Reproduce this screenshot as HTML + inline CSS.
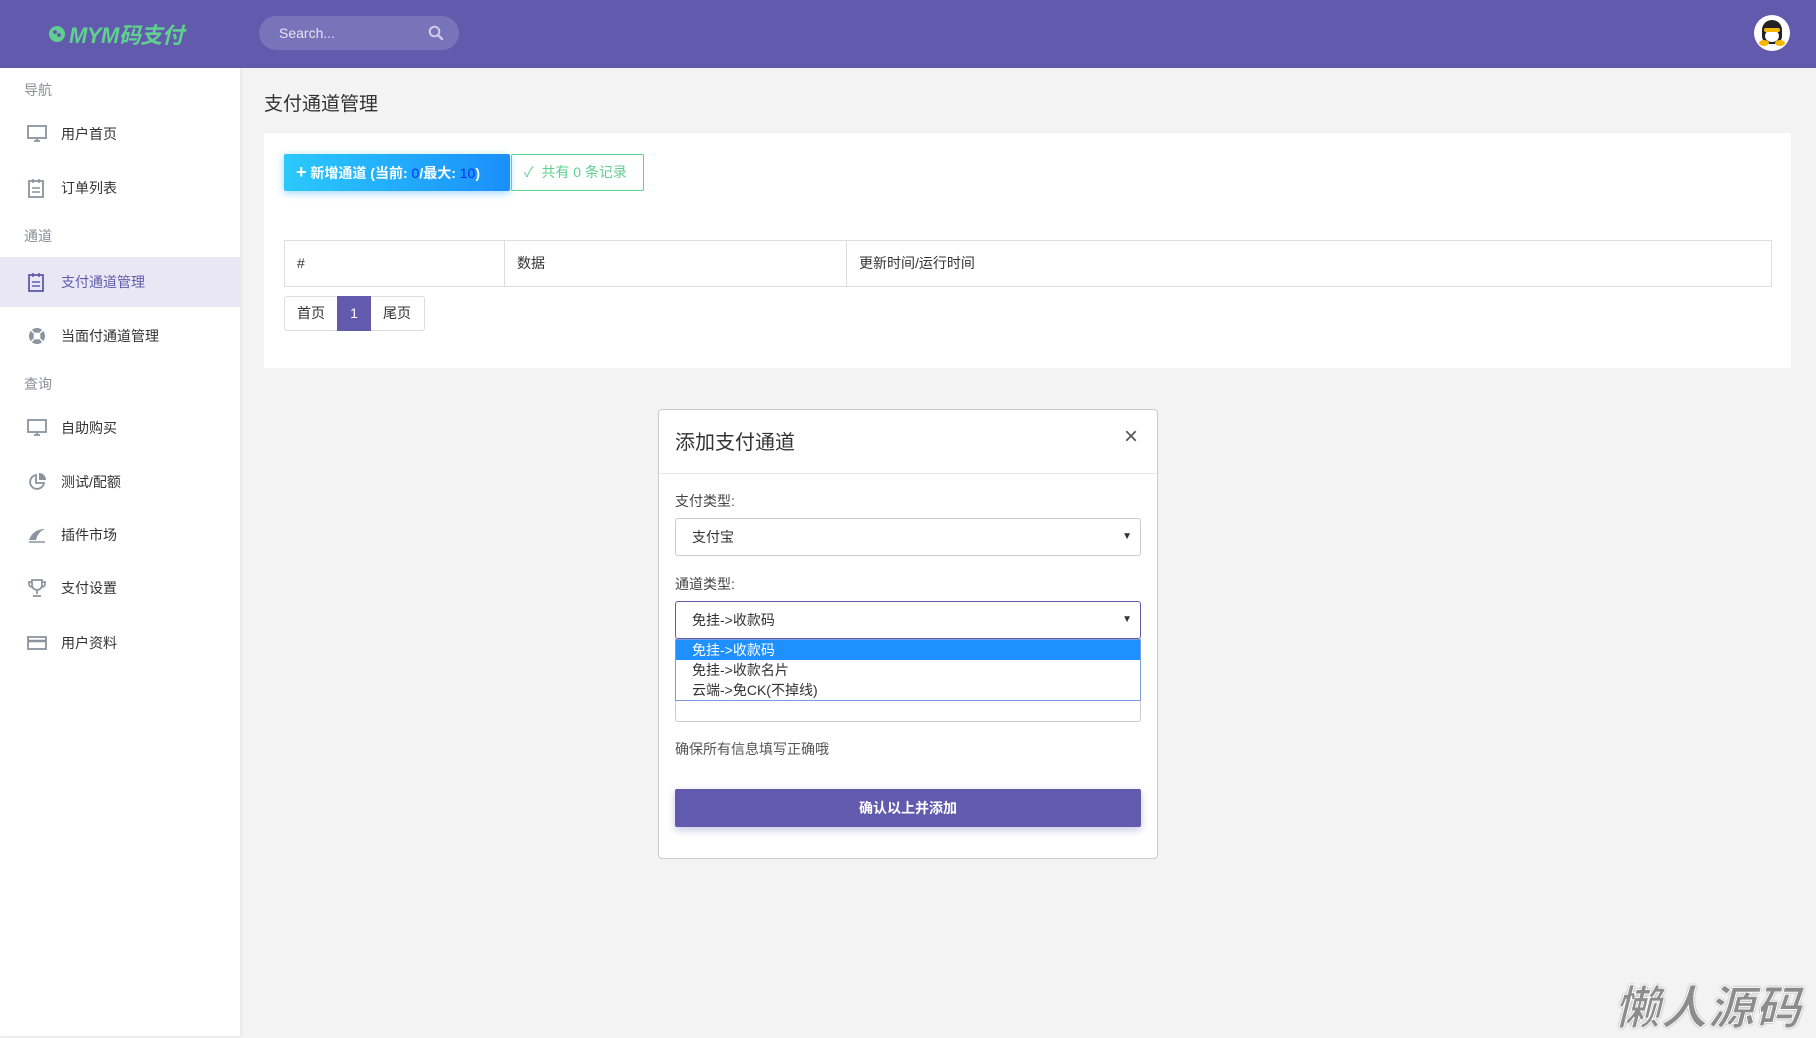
<!DOCTYPE html>
<html><head><meta charset="utf-8"><style>
*{box-sizing:border-box;margin:0;padding:0}
body{width:1816px;height:1036px;overflow:hidden;background:#f3f3f3;font-family:"Liberation Sans","Noto Sans CJK SC",sans-serif;color:#333;position:relative}
.abs{position:absolute}
#hdr{left:0;top:0;width:1816px;height:68px;background:#625bad}
#side{left:0;top:68px;width:240px;height:968px;background:#fff;box-shadow:1px 0 4px rgba(0,0,0,.06)}
.sec{position:absolute;left:24px;font-size:14px;color:#8a8f98}
.it{position:absolute;left:0;width:240px;height:40px;display:flex;align-items:center;font-size:14px;color:#333}
.it svg{position:absolute;left:27px}
.it span{position:absolute;left:61px}
.card{left:264px;top:133px;width:1527px;height:235px;background:#fff}
.modal{left:658px;top:409px;width:500px;height:450px;background:#fff;border:1px solid #ccc;border-radius:4px}
.lbl{position:absolute;left:16px;font-size:14px;color:#444}
.sel{position:absolute;left:16px;width:466px;height:38px;border:1px solid #ccc;border-radius:3px;background:#fff;font-size:14px;padding-left:16px;line-height:36px;color:#333}
.sel i{position:absolute;right:8px;top:0;font-style:normal;font-size:10px;color:#333}
</style></head><body>
<div id="hdr" class="abs">
  <div class="abs" style="left:49px;top:18px;font-size:22px;font-weight:bold;font-style:italic;color:#5fd08f;letter-spacing:-0.5px;white-space:nowrap"><span style="display:inline-block;width:16px;height:16px;border-radius:50%;background:#5fd08f;vertical-align:1px;margin-right:4px;position:relative"><span style="position:absolute;left:4px;top:4px;width:4px;height:4px;border-radius:50%;background:#625bad"></span><span style="position:absolute;left:8px;top:7px;width:4px;height:4px;border-radius:50%;background:#625bad"></span></span>MYM码支付</div>
  <div class="abs" style="left:259px;top:16px;width:200px;height:34px;border-radius:17px;background:rgba(255,255,255,.15)">
    <span class="abs" style="left:20px;top:9px;font-size:14px;color:#e6e4f4">Search...</span>
    <svg class="abs" style="left:169px;top:9px" width="16" height="16" viewBox="0 0 16 16"><circle cx="6.5" cy="6.5" r="4.8" fill="none" stroke="#cfcbe8" stroke-width="2"/><path d="M10 10l4 4" stroke="#cfcbe8" stroke-width="2.4" stroke-linecap="round"/></svg>
  </div>
  <div class="abs" style="left:1754px;top:15px;width:36px;height:36px;border-radius:50%;background:#fff;overflow:hidden">
    <div class="abs" style="left:8px;top:5px;width:20px;height:24px;border-radius:10px 10px 8px 8px;background:#222"></div>
    <div class="abs" style="left:11px;top:15px;width:14px;height:12px;border-radius:50%;background:#fff"></div>
    <div class="abs" style="left:10px;top:13px;width:16px;height:4px;border-radius:2px;background:#f5b800"></div>
    <div class="abs" style="left:5px;top:25px;width:10px;height:6px;border-radius:50%;background:#f5b800"></div>
    <div class="abs" style="left:21px;top:25px;width:10px;height:6px;border-radius:50%;background:#f5b800"></div>
  </div>
</div>
<div id="side" class="abs">
  <div class="sec" style="top:12px">导航</div>
  <div class="it" style="top:46px"><svg width="20" height="18" viewBox="0 0 20 18"><rect x="1" y="1" width="18" height="12" fill="none" stroke="#8a939e" stroke-width="1.8"/><path d="M7 16h6M10 13v3" stroke="#8a939e" stroke-width="1.8"/></svg><span>用户首页</span></div>
  <div class="it" style="top:100px"><svg width="18" height="20" viewBox="0 0 18 20"><rect x="2" y="3" width="14" height="16" fill="none" stroke="#8a939e" stroke-width="1.8"/><path d="M6 1v4M12 1v4M5 10h8M5 14h8" stroke="#8a939e" stroke-width="1.6"/></svg><span>订单列表</span></div>
  <div class="sec" style="top:158px">通道</div>
  <div class="it" style="top:189px;height:50px;background:#e8e7f3;color:#625bad"><svg width="18" height="20" viewBox="0 0 18 20"><rect x="2" y="3" width="14" height="16" fill="none" stroke="#625bad" stroke-width="1.8"/><path d="M6 1v4M12 1v4M5 10h8M5 14h8" stroke="#625bad" stroke-width="1.6"/></svg><span>支付通道管理</span></div>
  <div class="it" style="top:248px"><svg width="20" height="20" viewBox="0 0 20 20"><circle cx="10" cy="10" r="8" fill="#8a939e"/><circle cx="10" cy="10" r="3.5" fill="#fff"/><path d="M4 4l4 4M16 4l-4 4M4 16l4-4M16 16l-4-4" stroke="#fff" stroke-width="1.5"/></svg><span>当面付通道管理</span></div>
  <div class="sec" style="top:306px">查询</div>
  <div class="it" style="top:340px"><svg width="20" height="18" viewBox="0 0 20 18"><rect x="1" y="1" width="18" height="12" fill="none" stroke="#8a939e" stroke-width="1.8"/><path d="M7 16h6M10 13v3" stroke="#8a939e" stroke-width="1.8"/></svg><span>自助购买</span></div>
  <div class="it" style="top:394px"><svg width="20" height="20" viewBox="0 0 20 20"><path d="M9 3a7 7 0 1 0 8 8H9z" fill="none" stroke="#8a939e" stroke-width="1.8"/><path d="M12 1v7h7a7 7 0 0 0-7-7z" fill="#8a939e"/></svg><span>测试/配额</span></div>
  <div class="it" style="top:447px"><svg width="20" height="20" viewBox="0 0 20 20"><path d="M2 15c3-8 9-11 16-11-5 2-8 6-9 11z" fill="#8a939e"/><path d="M2 17h16" stroke="#8a939e" stroke-width="1.5"/></svg><span>插件市场</span></div>
  <div class="it" style="top:500px"><svg width="20" height="20" viewBox="0 0 20 20"><path d="M5 2h10v5a5 5 0 0 1-10 0z M5 4H2v2a3 3 0 0 0 3 3M15 4h3v2a3 3 0 0 1-3 3M10 12v4M6 18h8" fill="none" stroke="#8a939e" stroke-width="1.7"/></svg><span>支付设置</span></div>
  <div class="it" style="top:555px"><svg width="20" height="16" viewBox="0 0 20 16"><rect x="1" y="2" width="18" height="12" fill="none" stroke="#8a939e" stroke-width="1.8"/><path d="M1 6h18" stroke="#8a939e" stroke-width="2.5"/></svg><span>用户资料</span></div>
</div>
<div class="abs" style="left:264px;top:89px;font-size:19px;color:#333">支付通道管理</div>
<div class="abs card">
  <div class="abs" style="left:20px;top:21px;width:226px;height:37px;border-radius:2px;background:linear-gradient(90deg,#2bc9fb,#1a8ffb);box-shadow:0 2px 8px rgba(30,170,250,.45);color:#fff;font-size:14px;font-weight:bold;line-height:37px;padding-left:12px;white-space:nowrap"><span style="font-size:18px">+</span> 新增通道 (当前: <span style="color:#0033ee;font-weight:normal">0</span>/最大: <span style="color:#0033ee;font-weight:normal">10</span>)</div>
  <div class="abs" style="left:247px;top:21px;width:133px;height:37px;border:1px solid #5fd08f;border-radius:2px;color:#5fd08f;font-size:14px;line-height:35px;padding-left:12px;white-space:nowrap">✓&nbsp; 共有 0 条记录</div>
  <div class="abs" style="left:20px;top:107px;width:1488px;height:47px;border:1px solid #ddd;font-size:14px;line-height:45px">
    <span class="abs" style="left:12px">#</span>
    <span class="abs" style="left:219px;top:0;height:45px;border-left:1px solid #ddd"></span>
    <span class="abs" style="left:232px">数据</span>
    <span class="abs" style="left:561px;top:0;height:45px;border-left:1px solid #ddd"></span>
    <span class="abs" style="left:574px">更新时间/运行时间</span>
  </div>
  <div class="abs" style="left:20px;top:163px;width:141px;height:35px;border:1px solid #ddd;border-radius:3px;font-size:14px;line-height:33px">
    <span class="abs" style="left:12px">首页</span>
    <span class="abs" style="left:52px;top:-1px;width:34px;height:35px;background:#625bad;color:#fff;text-align:center;line-height:35px">1</span>
    <span class="abs" style="left:98px">尾页</span>
  </div>
</div>
<div class="abs modal">
  <div class="abs" style="left:16px;top:16px;font-size:20px;color:#333">添加支付通道</div>
  <div class="abs" style="left:465px;top:13px;font-size:24px;color:#555">×</div>
  <div class="abs" style="left:0;top:63px;width:498px;border-top:1px solid #e5e5e5"></div>
  <div class="lbl" style="top:81px">支付类型:</div>
  <div class="sel" style="top:108px">支付宝<i>▼</i></div>
  <div class="lbl" style="top:164px">通道类型:</div>
  <div class="sel" style="top:274px;height:38px"></div>
  <div class="sel" style="top:191px;border-color:#625bad">免挂->收款码<i>▼</i></div>
  <div class="abs" style="left:16px;top:229px;width:466px;height:62px;background:#fff;border:1px solid #7a9fdc;font-size:14px;line-height:20px">
    <div style="background:#1e90ff;color:#fff;padding-left:16px">免挂->收款码</div>
    <div style="padding-left:16px">免挂->收款名片</div>
    <div style="padding-left:16px">云端->免CK(不掉线)</div>
  </div>
  <div class="lbl" style="top:329px;color:#555">确保所有信息填写正确哦</div>
  <div class="abs" style="left:16px;top:379px;width:466px;height:38px;border-radius:2px;background:#625bad;box-shadow:0 3px 8px rgba(98,91,173,.35);color:#fff;font-size:14px;font-weight:bold;text-align:center;line-height:38px">确认以上并添加</div>
</div>
<div class="abs" style="left:1614px;top:972px;font-size:46px;font-weight:bold;font-style:italic;color:#8c8c8c;-webkit-text-stroke:1px #fff;text-shadow:0 0 2px #555;letter-spacing:1px;white-space:nowrap">懒人源码</div>
</body></html>
